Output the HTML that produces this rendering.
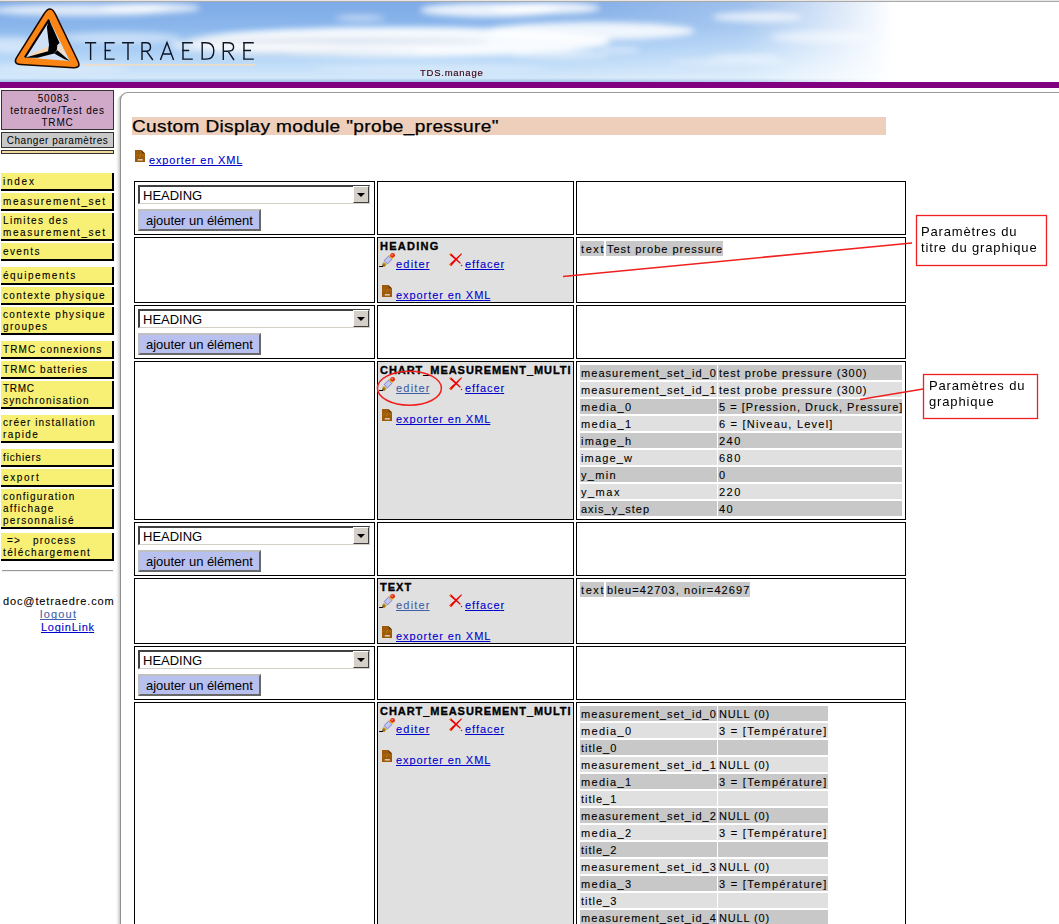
<!DOCTYPE html>
<html><head><meta charset="utf-8">
<style>
*{box-sizing:border-box}
html,body{margin:0;padding:0;width:1059px;height:924px;overflow:hidden;background:#fff}
body{position:relative;font-family:"Liberation Sans",sans-serif;color:#000}
.a{position:absolute}
.t11{position:absolute;-webkit-text-stroke:0.1px currentColor;font-size:11px;line-height:13px;letter-spacing:1px;white-space:nowrap}
#purple{left:0;top:82px;width:1059px;height:6px;background:#800080}
.menu{position:absolute;-webkit-text-stroke:0.1px #000;left:1px;width:113px;background:#f8f074;border-right:2px solid #000;border-bottom:2px solid #000;padding:3px 0 0 2px;font-size:10px;letter-spacing:1.45px;line-height:12px;white-space:nowrap}
.cell{position:absolute;border:1px solid #000;background:#fff}
.gray{background:#e0e0e0}
.lnk{color:#0000cc;text-decoration:underline;text-decoration-skip-ink:none}
.vis{color:#3e5ea8;text-decoration:underline;text-decoration-skip-ink:none}
.sel{position:absolute;height:19px;width:232px;background:#fff;border-top:2px solid #404040;border-left:2px solid #404040;border-bottom:1px solid #d4d0c8;border-right:1px solid #d4d0c8;font-size:13px;letter-spacing:0px;line-height:15px;padding:1px 0 0 3px}
.dd{position:absolute;right:0;top:-1px;width:16px;height:17px;background:#d4d0c8;border-top:1px solid #fff;border-left:1px solid #fff;border-right:1px solid #404040;border-bottom:1px solid #404040}
.dd:after{content:"";position:absolute;left:3px;top:6px;border-left:4px solid transparent;border-right:4px solid transparent;border-top:4px solid #000}
.btn{position:absolute;height:22px;width:123px;background:#b8c0f0;border-top:2px solid #c0c0c0;border-left:2px solid #c0c0c0;border-bottom:2px solid #686868;border-right:2px solid #686868;font-size:13px;letter-spacing:-0.05px;line-height:15px;padding:2px 0 0 6px;white-space:nowrap}
.pt{position:absolute;-webkit-text-stroke:0.1px #000;height:15px;font-size:11px;letter-spacing:1.05px;line-height:14px;white-space:nowrap;padding:1px 0 0 1px;overflow:hidden}
.d{background:#c8c8c8}.l{background:#e0e0e0}
.lab{position:absolute;-webkit-text-stroke:0.35px #000;font-size:11px;font-weight:bold;letter-spacing:1.1px;line-height:13px;white-space:nowrap}
</style></head><body>
<svg width="0" height="0" style="position:absolute"><defs>
<symbol id="pencil" viewBox="0 0 16 16">
<path d="M0.1 14.5H3.4L4.6 13" stroke="#000" stroke-width="1.1" fill="none"/>
<polygon points="3,12.3 4.8,10 7.6,12.6 5.2,15.2" fill="#c0901c"/>
<polygon points="3.6,13.2 4.8,12 6,13.2 4.6,14.6" fill="#7a5a10"/>
<polygon points="5.1,8.6 9.6,4.1 13,7.3 8.5,11.9" fill="#c4c4f6" stroke="#6a6ab4" stroke-width="0.8"/>
<polygon points="9.4,3.6 10.8,2.4 14.2,5.9 13,7.3" fill="#f2c400"/>
<circle cx="13.6" cy="3.3" r="2.4" fill="#e02c14"/>
<circle cx="13.1" cy="2.8" r="0.9" fill="#ff8a70"/>
</symbol>
<symbol id="xdel" viewBox="0 0 14 14">
<polygon points="0.2,1.6 2.0,0.2 11.9,9.9 11.0,10.8" fill="#ee0000"/>
<circle cx="12.5" cy="12.5" r="0.75" fill="#ee0000"/>
<polygon points="0.2,11.6 2.0,13.2 13,1.0 12.3,0.3" fill="#ee0000"/>
<circle cx="1.4" cy="1.2" r="0.6" fill="#ffa020"/>
<circle cx="1.5" cy="11.8" r="0.6" fill="#ffa020"/>
</symbol>
<symbol id="xmldoc" viewBox="0 0 10 12">
<polygon points="0,0 6.3,0 10,3.4 10,12 0,12" fill="#9c5a0a"/>
<polygon points="6.3,0 10,3.4 7,3" fill="#603808"/>
<path d="M2.4 4.5L1.6 5.3L2.4 6.1M7.6 4.5L8.4 5.3L7.6 6.1M5.6 3.8L4.4 7.4" stroke="#c08010" stroke-width="0.9" fill="none"/>
<rect x="2.8" y="9" width="5" height="1.6" fill="#d8c8b0"/>
</symbol>
</defs></svg>
<svg class="a" style="left:0;top:0" width="1059" height="82">
<defs>
<linearGradient id="skyg" x1="0" y1="0" x2="0" y2="1">
<stop offset="0" stop-color="#7eaae6"/><stop offset="0.3" stop-color="#8ab6ec"/>
<stop offset="0.55" stop-color="#a4caf4"/><stop offset="0.75" stop-color="#bcdaf8"/><stop offset="0.95" stop-color="#d4e8fa"/><stop offset="1" stop-color="#9cc0e6"/>
</linearGradient>
<linearGradient id="fadeg" x1="0" y1="0" x2="1" y2="0">
<stop offset="0" stop-color="#fff" stop-opacity="0"/><stop offset="0.5" stop-color="#fff" stop-opacity="0"/><stop offset="0.70" stop-color="#fff" stop-opacity="0.25"/>
<stop offset="0.845" stop-color="#fff" stop-opacity="1"/><stop offset="1" stop-color="#fff" stop-opacity="1"/>
</linearGradient>
<filter id="blr" x="-20%" y="-100%" width="140%" height="300%"><feGaussianBlur stdDeviation="3"/></filter>
</defs>
<rect x="0" y="2" width="1059" height="80" fill="url(#skyg)"/>
<g filter="url(#blr)"><ellipse cx="80" cy="10" rx="90" ry="6" fill="#fff" opacity="0.75"/><ellipse cx="150" cy="8" rx="50" ry="5" fill="#fff" opacity="0.8"/><ellipse cx="10" cy="45" rx="30" ry="8" fill="#fff" opacity="0.5"/><ellipse cx="120" cy="38" rx="60" ry="6" fill="#fff" opacity="0.45"/><ellipse cx="400" cy="42" rx="210" ry="15" fill="#fff" opacity="0.92"/><ellipse cx="250" cy="45" rx="80" ry="10" fill="#fff" opacity="0.6"/><ellipse cx="490" cy="10" rx="70" ry="7" fill="#fff" opacity="0.85"/><ellipse cx="360" cy="18" rx="25" ry="3" fill="#fff" opacity="0.5"/><ellipse cx="545" cy="8" rx="55" ry="6" fill="#fff" opacity="0.85"/><ellipse cx="590" cy="31" rx="105" ry="9" fill="#fff" opacity="0.85"/><ellipse cx="757" cy="17" rx="45" ry="5" fill="#fff" opacity="0.7"/><ellipse cx="560" cy="55" rx="50" ry="4" fill="#fff" opacity="0.5"/><ellipse cx="745" cy="57" rx="35" ry="3" fill="#fff" opacity="0.45"/><ellipse cx="620" cy="50" rx="20" ry="3" fill="#fff" opacity="0.5"/><ellipse cx="820" cy="37" rx="50" ry="6" fill="#fff" opacity="0.5"/><ellipse cx="730" cy="62" rx="60" ry="3" fill="#fff" opacity="0.4"/><ellipse cx="60" cy="68" rx="70" ry="4" fill="#fff" opacity="0.35"/><ellipse cx="430" cy="68" rx="120" ry="4" fill="#fff" opacity="0.3"/><ellipse cx="330" cy="41" rx="160" ry="2.5" fill="#a8b8d0" opacity="0.45"/><ellipse cx="300" cy="52" rx="120" ry="2" fill="#b8c8dc" opacity="0.4"/></g>
<rect x="0" y="2" width="1059" height="80" fill="url(#fadeg)"/>
<rect x="0" y="0" width="1059" height="1" fill="#e6e6e6"/>
<rect x="0" y="1" width="1059" height="1" fill="#aaa"/>

<path d="M43.7,13.8 L16.56,57.02 Q12.3,63.8 20.29,64.29 L73.1,67.5 Q81.1,68 77.6,60.8 L55.3,14.4 Q50.1,3.6 43.7,13.8 Z" transform="translate(0.3,0.2)" fill="#fa8414" stroke="#1a0800" stroke-width="1.5"/>
<polygon points="49,19 24.6,57.6 69.8,60.9" fill="#cfe0f6"/>
<polygon points="29.8,54.4 48,46.6 48,51.8 32.4,57" fill="#f8d4b0"/>
<polygon points="59.4,43 66.7,56.5 57.8,49.8" fill="#f8dcc0"/>
<line x1="49" y1="19.6" x2="24.9" y2="57.4" stroke="#000" stroke-width="2"/>
<polygon points="49,19.4 59.6,43 57.3,45.1 56.8,50.3 54.2,52.4 48,51.8 49,45.1 46.9,26.9" fill="#000"/>
<polygon points="48,51.3 24.6,57.8 37.6,57.8 54.2,53.6 56,51" fill="#000"/>
<polygon points="57.3,50.3 69.8,60.9 64.6,59.3 54.2,53.4" fill="#000"/>


<g stroke="#0e1626" stroke-width="1.4" fill="none" stroke-linecap="butt" stroke-linejoin="miter">
<path d="M85 42.8H96.2M90.6 42.8V60"/>
<path d="M105.3 42.8V59.1M104.4 42.8H114.7M104.4 50.5H110.7M104.4 59.1H114.7"/>
<path d="M122 42.8H134M128 42.8V60"/>
<path d="M142 60V42.8H146.5Q150.5 42.8 150.5 47Q150.5 51.2 146.5 51.2H142M146.5 51.2L152.8 60"/>
<path d="M160.4 60L167 42.5L173.6 60M162.8 54H171.2"/>
<path d="M183 42.8V59.1M182.1 42.8H192.8M182.1 50.5H189.2M182.1 59.1H192.8"/>
<path d="M202.2 42.8V59.1M201.3 42.8H206Q213.8 42.8 213.8 51Q213.8 59.1 206 59.1H201.3"/>
<path d="M223.3 60V42.8H228Q233.6 42.8 233.6 47Q233.6 51.2 228 51.2H223.3M228 51.2L234 60"/>
<path d="M244 42.8V59.1M243.1 42.8H253.8M243.1 50.5H251M243.1 59.1H253.8"/>
</g>
<rect x="83.5" y="64" width="171.5" height="1.6" fill="#f0dcc4"/>

</svg>
<div class="a" style="left:420px;top:67px;font-size:9.5px;letter-spacing:0.75px;line-height:12px;color:#400010;-webkit-text-stroke:0.15px #400010;white-space:nowrap">TDS.manage</div>
<div id="purple" class="a"></div>
<div class="a" style="left:1px;top:90px;width:113px;height:40px;background:#d0a8c8;border:1px solid #333;font-size:10px;letter-spacing:0.8px;line-height:12px;text-align:center;padding-top:2px">50083 -<br>tetraedre/Test des<br>TRMC</div>
<div class="a" style="left:1px;top:132px;width:113px;height:16px;background:#c8c8c8;border:1px solid #333;font-size:10px;letter-spacing:0.55px;line-height:12px;text-align:center;padding-top:2px">Changer paramètres</div>
<div class="a" style="left:1px;top:150px;width:113px;height:4px;background:#f0d8a0;border:1px solid #333"></div>
<div class="menu" style="top:173px;height:18px;padding-top:3px"><span style="letter-spacing:1.75px">index</span></div>
<div class="menu" style="top:193px;height:18px;padding-top:3px"><span style="letter-spacing:1.57px">measurement_set</span></div>
<div class="menu" style="top:213px;height:28px;padding-top:2px"><span style="letter-spacing:1.4px">Limites des</span><br><span style="letter-spacing:1.57px">measurement_set</span></div>
<div class="menu" style="top:243px;height:18px;padding-top:3px"><span style="letter-spacing:1.4px">events</span></div>
<div class="menu" style="top:267px;height:18px;padding-top:3px"><span style="letter-spacing:1.5px">équipements</span></div>
<div class="menu" style="top:287px;height:18px;padding-top:3px"><span style="letter-spacing:1.31px">contexte physique</span></div>
<div class="menu" style="top:307px;height:28px;padding-top:2px"><span style="letter-spacing:1.31px">contexte physique</span><br><span style="letter-spacing:1.33px">groupes</span></div>
<div class="menu" style="top:341px;height:18px;padding-top:3px"><span style="letter-spacing:1.14px">TRMC connexions</span></div>
<div class="menu" style="top:361px;height:18px;padding-top:3px"><span style="letter-spacing:1.08px">TRMC batteries</span></div>
<div class="menu" style="top:381px;height:28px;padding-top:2px"><span style="letter-spacing:0.7px">TRMC</span><br><span style="letter-spacing:1.14px">synchronisation</span></div>
<div class="menu" style="top:415px;height:28px;padding-top:2px"><span style="letter-spacing:1.12px">créer installation</span><br><span style="letter-spacing:1.4px">rapide</span></div>
<div class="menu" style="top:449px;height:18px;padding-top:3px"><span style="letter-spacing:0.86px">fichiers</span></div>
<div class="menu" style="top:469px;height:18px;padding-top:3px"><span style="letter-spacing:1.6px">export</span></div>
<div class="menu" style="top:489px;height:40px;padding-top:2px"><span style="letter-spacing:1.17px">configuration</span><br><span style="letter-spacing:1.25px">affichage</span><br><span style="letter-spacing:1.27px">personnalisé</span></div>
<div class="menu" style="top:533px;height:28px;padding-top:2px"><span style="letter-spacing:1.2px">&nbsp;=&gt;&nbsp;&nbsp; process</span><br><span style="letter-spacing:1.38px">téléchargement</span></div>
<div class="a" style="left:2px;top:570px;width:111px;height:2px;border-top:1px solid #999;border-bottom:1px solid #eee"></div>
<div class="t11" style="left:3px;top:595px;letter-spacing:0.875px">doc@tetraedre.com</div>
<div class="t11 vis" style="left:40px;top:608px;letter-spacing:1.2px">logou<span style="letter-spacing:0">t</span></div>
<div class="t11 lnk" style="left:41px;top:621px;letter-spacing:0.75px">LoginLin<span style="letter-spacing:0">k</span></div>
<div class="a" style="left:116px;top:94px;width:12px;height:900px;border-top-left-radius:10px;background:linear-gradient(90deg,rgba(0,0,0,0) 0,rgba(0,0,0,0.06) 1.5px,rgba(0,0,0,0.22) 4px)"></div>
<div class="a" style="left:120px;top:92px;width:1000px;height:900px;background:#fff;border-top:1px solid #999;border-left:1px solid #909090;border-top-left-radius:8px"></div>
<div class="a" style="left:132px;top:117px;width:754px;height:18px;background:#edcfbb"></div>
<div class="a" style="left:132px;top:117px;font-size:16px;letter-spacing:0.3px;line-height:20px;white-space:nowrap;transform-origin:0 0;transform:scaleX(1.19);-webkit-text-stroke:0.25px #000">Custom Display module "probe_pressure"</div>
<svg class="a" style="left:135px;top:150px" width="10" height="12"><use href="#xmldoc"/></svg>
<div class="t11 lnk" style="left:149px;top:154px;letter-spacing:0.86px">exporter en XM<span style="letter-spacing:0">L</span></div>
<div class="cell" style="left:134px;top:181px;width:241px;height:54px"></div>
<div class="cell" style="left:377px;top:181px;width:197px;height:54px"></div>
<div class="cell" style="left:576px;top:181px;width:330px;height:54px"></div>
<div class="sel" style="left:138px;top:185px">HEADING<div class="dd"></div></div>
<div class="btn" style="left:138px;top:209px">ajouter un élément</div>
<div class="cell" style="left:134px;top:237px;width:241px;height:66px"></div>
<div class="cell gray" style="left:377px;top:237px;width:197px;height:66px"></div>
<div class="cell" style="left:576px;top:237px;width:330px;height:66px"></div>
<div class="lab" style="left:380px;top:240px;letter-spacing:1.25px">HEADING</div>
<svg class="a" style="left:379px;top:252px" width="16" height="16"><use href="#pencil"/></svg>
<svg class="a" style="left:449px;top:253px" width="14" height="14"><use href="#xdel"/></svg>
<svg class="a" style="left:382px;top:285px" width="10" height="12"><use href="#xmldoc"/></svg>
<div class="t11 lnk" style="left:396px;top:258px;letter-spacing:1.2px">edite<span style="letter-spacing:0">r</span></div>
<div class="t11 lnk" style="left:465px;top:258px;letter-spacing:0.95px">effac<span>e</span><span style="letter-spacing:0">r</span></div>
<div class="t11 lnk" style="left:396px;top:289px;letter-spacing:0.93px">exporter en XM<span style="letter-spacing:0">L</span></div>
<div class="pt d" style="left:580px;top:241px;width:24px;letter-spacing:1.6px">text</div>
<div class="pt d" style="left:606px;top:241px;width:117px;letter-spacing:1.0px">Test probe pressure</div>
<div class="cell" style="left:134px;top:305px;width:241px;height:54px"></div>
<div class="cell" style="left:377px;top:305px;width:197px;height:54px"></div>
<div class="cell" style="left:576px;top:305px;width:330px;height:54px"></div>
<div class="sel" style="left:138px;top:309px">HEADING<div class="dd"></div></div>
<div class="btn" style="left:138px;top:333px">ajouter un élément</div>
<div class="cell" style="left:134px;top:361px;width:241px;height:159px"></div>
<div class="cell gray" style="left:377px;top:361px;width:197px;height:159px"></div>
<div class="cell" style="left:576px;top:361px;width:330px;height:159px"></div>
<div class="lab" style="left:380px;top:364px;letter-spacing:0.95px">CHART_MEASUREMENT_MULTI</div>
<svg class="a" style="left:379px;top:376px" width="16" height="16"><use href="#pencil"/></svg>
<svg class="a" style="left:449px;top:377px" width="14" height="14"><use href="#xdel"/></svg>
<svg class="a" style="left:382px;top:409px" width="10" height="12"><use href="#xmldoc"/></svg>
<div class="t11 vis" style="left:396px;top:382px;letter-spacing:1.2px">edite<span style="letter-spacing:0">r</span></div>
<div class="t11 lnk" style="left:465px;top:382px;letter-spacing:0.95px">effac<span>e</span><span style="letter-spacing:0">r</span></div>
<div class="t11 lnk" style="left:396px;top:413px;letter-spacing:0.93px">exporter en XM<span style="letter-spacing:0">L</span></div>
<div class="pt d" style="left:580px;top:365px;width:137px;letter-spacing:1.05px">measurement_set_id_0</div>
<div class="pt d" style="left:718px;top:365px;width:184px;letter-spacing:1.0px">test probe pressure (300)</div>
<div class="pt l" style="left:580px;top:382px;width:137px;letter-spacing:1.05px">measurement_set_id_1</div>
<div class="pt l" style="left:718px;top:382px;width:184px;letter-spacing:1.0px">test probe pressure (300)</div>
<div class="pt d" style="left:580px;top:399px;width:137px;letter-spacing:1.3px">media_0</div>
<div class="pt d" style="left:718px;top:399px;width:184px;letter-spacing:1.03px">5 = [Pression, Druck, Pressure]</div>
<div class="pt l" style="left:580px;top:416px;width:137px;letter-spacing:1.3px">media_1</div>
<div class="pt l" style="left:718px;top:416px;width:184px;letter-spacing:1.22px">6 = [Niveau, Level]</div>
<div class="pt d" style="left:580px;top:433px;width:137px;letter-spacing:1.3px">image_h</div>
<div class="pt d" style="left:718px;top:433px;width:184px;letter-spacing:1.5px">240</div>
<div class="pt l" style="left:580px;top:450px;width:137px;letter-spacing:1.15px">image_w</div>
<div class="pt l" style="left:718px;top:450px;width:184px;letter-spacing:1.5px">680</div>
<div class="pt d" style="left:580px;top:467px;width:137px;letter-spacing:1.3px">y_min</div>
<div class="pt d" style="left:718px;top:467px;width:184px;letter-spacing:1.0px">0</div>
<div class="pt l" style="left:580px;top:484px;width:137px;letter-spacing:1.5px">y_max</div>
<div class="pt l" style="left:718px;top:484px;width:184px;letter-spacing:1.5px">220</div>
<div class="pt d" style="left:580px;top:501px;width:137px;letter-spacing:1.0px">axis_y_step</div>
<div class="pt d" style="left:718px;top:501px;width:184px;letter-spacing:1.5px">40</div>
<div class="cell" style="left:134px;top:522px;width:241px;height:54px"></div>
<div class="cell" style="left:377px;top:522px;width:197px;height:54px"></div>
<div class="cell" style="left:576px;top:522px;width:330px;height:54px"></div>
<div class="sel" style="left:138px;top:526px">HEADING<div class="dd"></div></div>
<div class="btn" style="left:138px;top:550px">ajouter un élément</div>
<div class="cell" style="left:134px;top:578px;width:241px;height:66px"></div>
<div class="cell gray" style="left:377px;top:578px;width:197px;height:66px"></div>
<div class="cell" style="left:576px;top:578px;width:330px;height:66px"></div>
<div class="lab" style="left:380px;top:581px;letter-spacing:1.0px">TEXT</div>
<svg class="a" style="left:379px;top:593px" width="16" height="16"><use href="#pencil"/></svg>
<svg class="a" style="left:449px;top:594px" width="14" height="14"><use href="#xdel"/></svg>
<svg class="a" style="left:382px;top:626px" width="10" height="12"><use href="#xmldoc"/></svg>
<div class="t11 vis" style="left:396px;top:599px;letter-spacing:1.2px">edite<span style="letter-spacing:0">r</span></div>
<div class="t11 lnk" style="left:465px;top:599px;letter-spacing:0.95px">effac<span>e</span><span style="letter-spacing:0">r</span></div>
<div class="t11 lnk" style="left:396px;top:630px;letter-spacing:0.93px">exporter en XM<span style="letter-spacing:0">L</span></div>
<div class="pt d" style="left:580px;top:582px;width:24px;letter-spacing:1.6px">text</div>
<div class="pt d" style="left:606px;top:582px;width:144px;letter-spacing:1.1px">bleu=42703, noir=42697</div>
<div class="cell" style="left:134px;top:646px;width:241px;height:54px"></div>
<div class="cell" style="left:377px;top:646px;width:197px;height:54px"></div>
<div class="cell" style="left:576px;top:646px;width:330px;height:54px"></div>
<div class="sel" style="left:138px;top:650px">HEADING<div class="dd"></div></div>
<div class="btn" style="left:138px;top:674px">ajouter un élément</div>
<div class="cell" style="left:134px;top:702px;width:241px;height:400px"></div>
<div class="cell gray" style="left:377px;top:702px;width:197px;height:400px"></div>
<div class="cell" style="left:576px;top:702px;width:330px;height:400px"></div>
<div class="lab" style="left:380px;top:705px;letter-spacing:0.95px">CHART_MEASUREMENT_MULTI</div>
<svg class="a" style="left:379px;top:717px" width="16" height="16"><use href="#pencil"/></svg>
<svg class="a" style="left:449px;top:718px" width="14" height="14"><use href="#xdel"/></svg>
<svg class="a" style="left:382px;top:750px" width="10" height="12"><use href="#xmldoc"/></svg>
<div class="t11 lnk" style="left:396px;top:723px;letter-spacing:1.2px">edite<span style="letter-spacing:0">r</span></div>
<div class="t11 lnk" style="left:465px;top:723px;letter-spacing:0.95px">effac<span>e</span><span style="letter-spacing:0">r</span></div>
<div class="t11 lnk" style="left:396px;top:754px;letter-spacing:0.93px">exporter en XM<span style="letter-spacing:0">L</span></div>
<div class="pt d" style="left:580px;top:706px;width:137px;letter-spacing:1.05px">measurement_set_id_0</div>
<div class="pt d" style="left:718px;top:706px;width:110px;letter-spacing:0.86px">NULL (0)</div>
<div class="pt l" style="left:580px;top:723px;width:137px;letter-spacing:1.3px">media_0</div>
<div class="pt l" style="left:718px;top:723px;width:110px;letter-spacing:1.3px">3 = [Température]</div>
<div class="pt d" style="left:580px;top:740px;width:137px;letter-spacing:1.0px">title_0</div>
<div class="pt d" style="left:718px;top:740px;width:110px;letter-spacing:1.05px"></div>
<div class="pt l" style="left:580px;top:757px;width:137px;letter-spacing:1.05px">measurement_set_id_1</div>
<div class="pt l" style="left:718px;top:757px;width:110px;letter-spacing:0.86px">NULL (0)</div>
<div class="pt d" style="left:580px;top:774px;width:137px;letter-spacing:1.3px">media_1</div>
<div class="pt d" style="left:718px;top:774px;width:110px;letter-spacing:1.3px">3 = [Température]</div>
<div class="pt l" style="left:580px;top:791px;width:137px;letter-spacing:1.0px">title_1</div>
<div class="pt l" style="left:718px;top:791px;width:110px;letter-spacing:1.05px"></div>
<div class="pt d" style="left:580px;top:808px;width:137px;letter-spacing:1.05px">measurement_set_id_2</div>
<div class="pt d" style="left:718px;top:808px;width:110px;letter-spacing:0.86px">NULL (0)</div>
<div class="pt l" style="left:580px;top:825px;width:137px;letter-spacing:1.3px">media_2</div>
<div class="pt l" style="left:718px;top:825px;width:110px;letter-spacing:1.3px">3 = [Température]</div>
<div class="pt d" style="left:580px;top:842px;width:137px;letter-spacing:1.0px">title_2</div>
<div class="pt d" style="left:718px;top:842px;width:110px;letter-spacing:1.05px"></div>
<div class="pt l" style="left:580px;top:859px;width:137px;letter-spacing:1.05px">measurement_set_id_3</div>
<div class="pt l" style="left:718px;top:859px;width:110px;letter-spacing:0.86px">NULL (0)</div>
<div class="pt d" style="left:580px;top:876px;width:137px;letter-spacing:1.3px">media_3</div>
<div class="pt d" style="left:718px;top:876px;width:110px;letter-spacing:1.3px">3 = [Température]</div>
<div class="pt l" style="left:580px;top:893px;width:137px;letter-spacing:1.0px">title_3</div>
<div class="pt l" style="left:718px;top:893px;width:110px;letter-spacing:1.05px"></div>
<div class="pt d" style="left:580px;top:910px;width:137px;letter-spacing:1.05px">measurement_set_id_4</div>
<div class="pt d" style="left:718px;top:910px;width:110px;letter-spacing:0.86px">NULL (0)</div>
<svg class="a" style="left:0;top:0" width="1059" height="924">
<line x1="563" y1="276.5" x2="912" y2="243" stroke="#f02020" stroke-width="1.6"/>
<rect x="916.5" y="215.5" width="130" height="50" fill="#fff" stroke="#f02020" stroke-width="1.3"/>
<line x1="860" y1="399.5" x2="923" y2="389" stroke="#f02020" stroke-width="1.6"/>
<rect x="923.5" y="374.5" width="114" height="44" fill="#fff" stroke="#f02020" stroke-width="1.3"/>
<ellipse cx="409.4" cy="388.2" rx="32" ry="17" fill="none" stroke="#f02020" stroke-width="1.5"/>
</svg>
<div class="a" style="left:921px;top:224px;font-size:13px;letter-spacing:0.85px;line-height:16px;white-space:nowrap">Paramètres du<br>titre du graphique</div>
<div class="a" style="left:929px;top:378px;font-size:13px;letter-spacing:0.85px;line-height:16px;white-space:nowrap">Paramètres du<br>graphique</div>

</body></html>
